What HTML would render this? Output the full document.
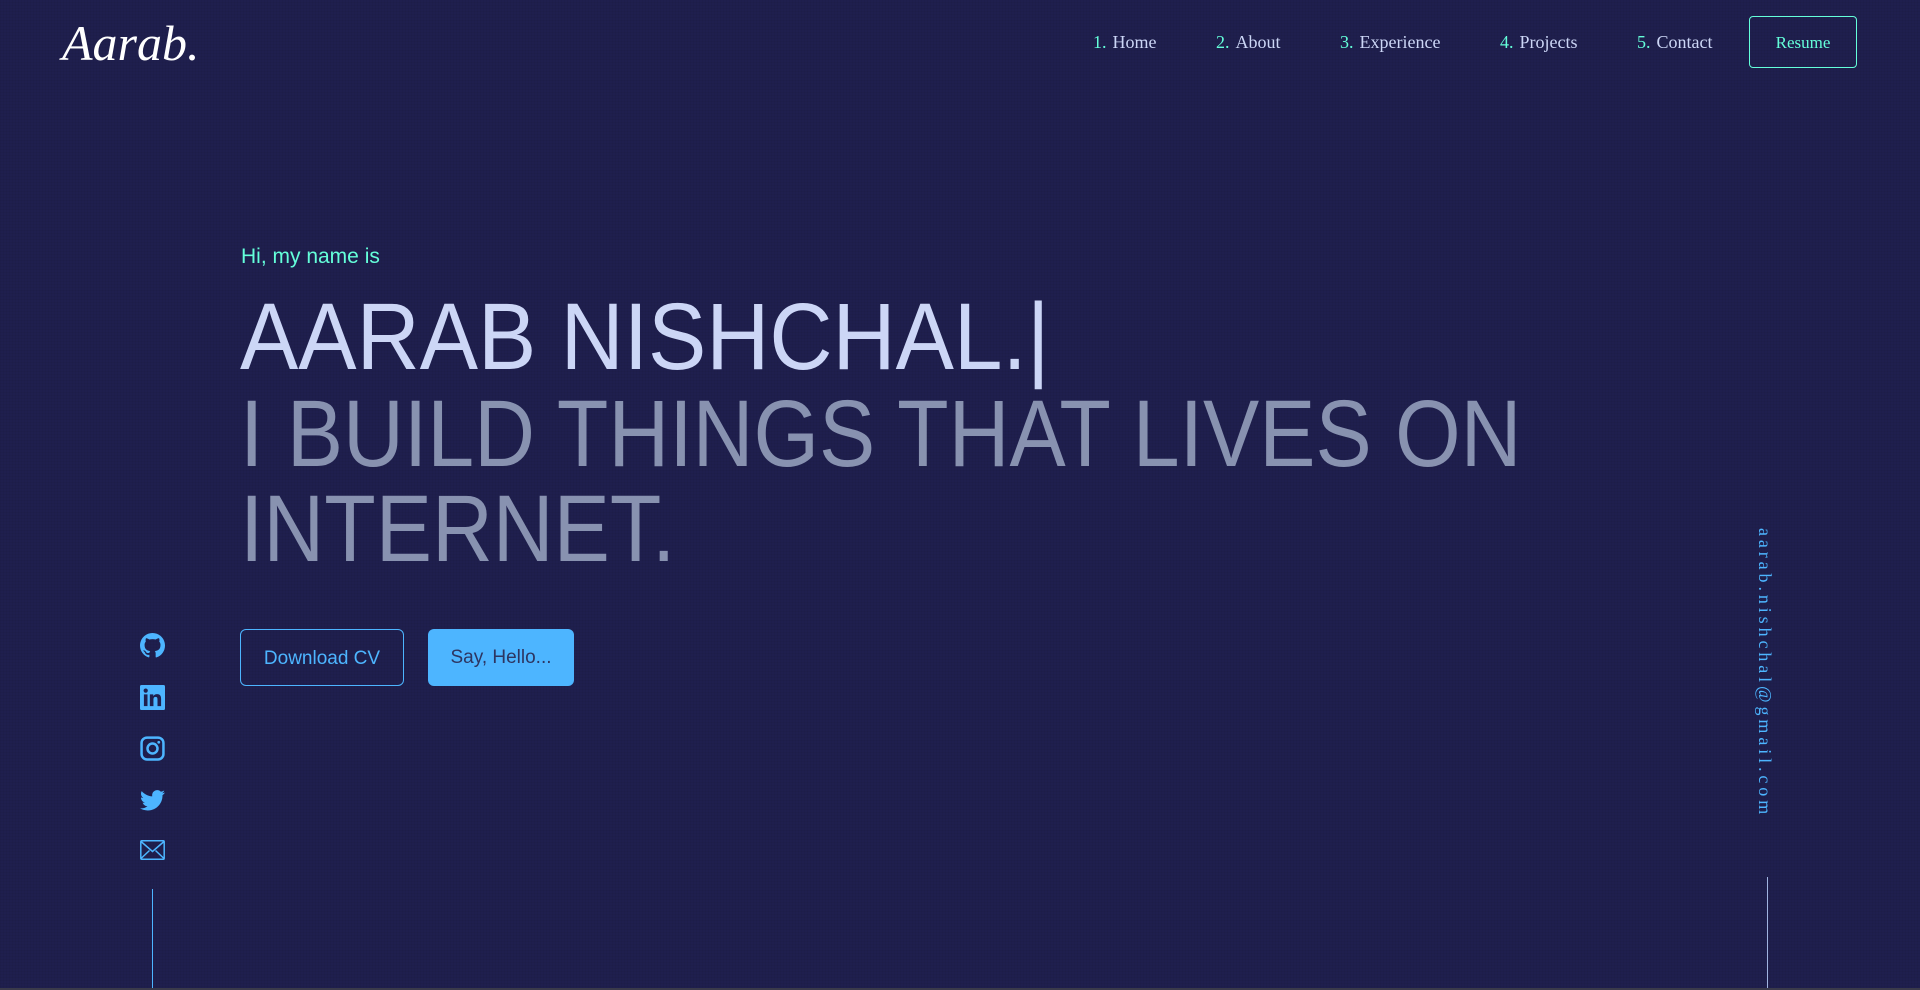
<!DOCTYPE html>
<html><head><meta charset="utf-8">
<style>
html,body{margin:0;padding:0}
body{width:1920px;height:990px;overflow:hidden;background:#1f1f4e;position:relative;font-family:"Liberation Sans",sans-serif;
background-image:repeating-linear-gradient(0deg,rgba(0,0,0,0.04) 0 1px,transparent 1px 3px),repeating-linear-gradient(90deg,rgba(0,0,0,0.04) 0 1px,transparent 1px 3px);}
.logo{position:absolute;left:62px;top:14px;font-family:"Liberation Serif",serif;font-style:italic;font-size:50px;color:#fff;}
.nav a{position:absolute;top:32px;font-family:"Liberation Serif",serif;font-size:18px;color:#ccd6f6;text-decoration:none;white-space:nowrap}
.nav a span{color:#64ffda;margin-right:6px}
.resume{position:absolute;left:1749px;top:16px;width:108px;height:52px;border:1px solid #64ffda;border-radius:4px;box-sizing:border-box;color:#64ffda;font-family:"Liberation Serif",serif;font-size:17px;text-align:center;line-height:52px}
.hi{position:absolute;left:241px;top:245px;font-size:21px;color:#64ffda}
.name{position:absolute;left:240px;top:282px;font-size:95px;color:#ccd6f6;line-height:110px;white-space:nowrap;transform:scaleX(0.92);transform-origin:0 0}
.sub{position:absolute;left:240px;top:387px;font-size:95px;color:#8892b0;line-height:95px;white-space:nowrap;transform:scaleX(0.887);transform-origin:0 0}
.btn{position:absolute;top:629px;height:57px;box-sizing:border-box;border-radius:6px;font-size:19px;text-align:center;line-height:57px}
.b1{left:240px;width:164px;border:1px solid #4db5ff;color:#4db5ff}
.b2{left:428px;width:146px;background:#4db5ff;color:#2d3561}
.ic{position:absolute;left:140px;width:25px;height:25px}
.vline{position:absolute;width:1px;background:#4db5ff}
.email{position:absolute;left:1754px;top:528px;writing-mode:vertical-rl;font-family:"Liberation Serif",serif;font-size:18px;letter-spacing:3.9px;color:#4db5ff}
.bottom{position:absolute;left:0;top:988px;width:1920px;height:2px;background:#3a3a4a}
</style></head><body>
<div class="logo">Aarab.</div>
<div class="nav">
<a style="left:1093px"><span>1.</span>Home</a>
<a style="left:1216px"><span>2.</span>About</a>
<a style="left:1340px"><span>3.</span>Experience</a>
<a style="left:1500px"><span>4.</span>Projects</a>
<a style="left:1637px"><span>5.</span>Contact</a>
</div>
<div class="resume">Resume</div>

<div class="hi">Hi, my name is</div>
<div class="name">AARAB NISHCHAL.|</div>
<div class="sub">I BUILD THINGS THAT LIVES ON<br>INTERNET.</div>

<div class="btn b1">Download CV</div>
<div class="btn b2">Say, Hello...</div>

<svg class="ic" style="top:633px" viewBox="0 0 16 16"><path fill="#4db5ff" d="M8 0C3.58 0 0 3.58 0 8c0 3.54 2.29 6.53 5.47 7.59.4.07.55-.17.55-.38v-1.33c-2.23.48-2.7-1.07-2.7-1.07-.36-.93-.89-1.170-.89-1.17-.73-.5.06-.49.06-.49.8.06 1.23.83 1.23.83.71 1.23 1.87.87 2.33.66.07-.52.28-.87.51-1.07-1.78-.2-3.64-.89-3.64-3.95 0-.87.31-1.59.82-2.15-.08-.2-.36-1.02.08-2.12 0 0 .67-.21 2.2.82.64-.18 1.32-.27 2-.27.68 0 1.36.09 2 .27 1.53-1.04 2.2-.82 2.2-.82.44 1.1.16 1.92.08 2.12.51.56.82 1.27.82 2.15 0 3.07-1.87 3.75-3.65 3.95.29.25.54.73.54 1.48v2.2c0 .21.15.46.55.38A8.01 8.01 0 0016 8c0-4.42-3.58-8-8-8z"/></svg>
<svg class="ic" style="top:685px" viewBox="0 0 16 16"><rect width="16" height="16" rx="1" fill="#4db5ff"/><rect x="2.5" y="6" width="2.3" height="7.5" fill="#1f1f4e"/><circle cx="3.65" cy="3.6" r="1.35" fill="#1f1f4e"/><path fill="#1f1f4e" d="M6.3 6h2.2v1.1c.4-.7 1.2-1.3 2.4-1.3 2.2 0 2.6 1.4 2.6 3.3v4.4h-2.3V9.6c0-.9 0-2-1.2-2s-1.4.9-1.4 1.9v4H6.3z"/></svg>
<svg class="ic" style="top:736px" viewBox="0 0 16 16"><rect x="1" y="1" width="14" height="14" rx="3.5" fill="none" stroke="#4db5ff" stroke-width="1.6"/><circle cx="8" cy="8" r="3.2" fill="none" stroke="#4db5ff" stroke-width="1.6"/><circle cx="12" cy="4" r="0.9" fill="#4db5ff"/></svg>
<svg class="ic" style="top:787px" viewBox="0 0 16 16"><path fill="#4db5ff" d="M16 3.5c-.6.3-1.2.4-1.9.5.7-.4 1.2-1 1.4-1.8-.6.4-1.3.6-2.1.8A3.3 3.3 0 007.8 6C5.1 5.8 2.7 4.5 1.1 2.6c-.9 1.5-.4 3.4 1 4.4-.5 0-1-.2-1.5-.4 0 1.6 1.1 3 2.6 3.3-.5.1-1 .2-1.5.1.4 1.3 1.6 2.3 3.1 2.3A6.6 6.6 0 010 13.6 9.3 9.3 0 005 15c6 0 9.4-5 9.4-9.4v-.4c.6-.5 1.2-1 1.6-1.7z"/></svg>
<svg class="ic" style="top:840px;height:20px" viewBox="0 0 25 20"><rect x="0.8" y="0.8" width="23.4" height="18.4" rx="1" fill="none" stroke="#4db5ff" stroke-width="1.5"/><path d="M1 1.5l11.5 10L24 1.5M1 18.5l8.5-8M24 18.5l-8.5-8" fill="none" stroke="#4db5ff" stroke-width="1.5"/></svg>
<div class="vline" style="left:152px;top:889px;height:99px"></div>

<div class="email">aarab.nishchal@gmail.com</div>
<div class="vline" style="left:1767px;top:877px;height:111px;background:#a0b4e0"></div>
<div class="bottom"></div>
</body></html>
